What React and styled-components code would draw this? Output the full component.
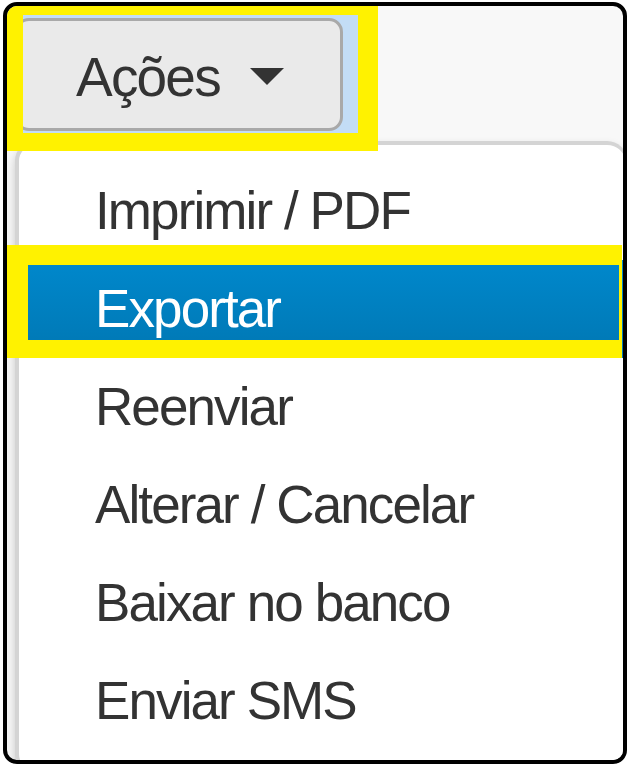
import styled, { createGlobalStyle } from "styled-components";

const Global = createGlobalStyle`
  html, body {
    margin: 0;
    padding: 0;
    background: #ffffff;
  }
  body {
    font-family: "Liberation Sans", Arial, sans-serif;
  }
`;

const Frame = styled.div`
  position: relative;
  box-sizing: border-box;
  margin: 2px 0 0 3px;
  width: 624px;
  height: 762px;
  border: 4px solid #000;
  border-radius: 14px;
  overflow: hidden;
  background: #f8f8f8;
  padding: 9px 0 0 8px;
`;

const ButtonGroup = styled.div`
  display: inline-flex;
  background: #c3ddf6;
  padding: 3px 15px 3px 0;
`;

const Button = styled.button`
  box-sizing: border-box;
  display: flex;
  align-items: center;
  gap: 30px;
  width: 328px;
  height: 113px;
  padding: 0 0 0 58px;
  border: 3px solid #a9a9a9;
  border-radius: 14px;
  background: #eaeaea;
  color: #333;
  font-family: inherit;
  font-size: 55px;
  letter-spacing: -1.8px;
  line-height: 1;
`;

const Label = styled.span`
  padding-top: 6px;
`;

const Caret = styled.span`
  width: 0;
  height: 0;
  border-top: 17px solid #333;
  border-left: 17px solid transparent;
  border-right: 17px solid transparent;
  margin-top: 4px;
`;

const Menu = styled.ul`
  box-sizing: border-box;
  list-style: none;
  margin: 7px 0 0 0;
  width: 612px;
  padding: 17px 0 20px 0;
  background: #fff;
  border: 4px solid rgba(0, 0, 0, 0.17);
  border-right-width: 2px;
  border-radius: 20px;
  box-shadow: 0 5px 10px rgba(0, 0, 0, 0.2);
`;

const Item = styled.li`
  height: 98px;
  line-height: 98px;
  padding-left: 76px;
  font-size: 53px;
  letter-spacing: -1.9px;
  white-space: nowrap;
  color: ${(p) => (p.$active ? "#fff" : "#333")};
  background: ${(p) =>
    p.$active ? "linear-gradient(to bottom, #0088cc, #0077b3)" : "transparent"};
`;

const Mark = styled.div`
  position: absolute;
  box-sizing: border-box;
  border-style: solid;
  border-color: #fff200;
  pointer-events: none;
`;

const items = [
  "Imprimir / PDF",
  "Exportar",
  "Reenviar",
  "Alterar / Cancelar",
  "Baixar no banco",
  "Enviar SMS",
];

export default function App() {
  return (
    <>
      <Global />
      <Frame>
        <ButtonGroup>
          <Button>
            <Label>Ações</Label>
            <Caret />
          </Button>
        </ButtonGroup>
        <Menu>
          {items.map((t) => (
            <Item key={t} $active={t === "Exportar"}>
              {t}
            </Item>
          ))}
        </Menu>
        <Mark
          style={{
            left: 0,
            top: -1,
            width: 371,
            height: 146,
            borderWidth: "10px 20px 18px 16px",
          }}
        />
        <Mark
          style={{
            left: 0,
            top: 239,
            width: 615,
            height: 113,
            borderWidth: "20px 3px 18px 21px",
          }}
        />
      </Frame>
    </>
  );
}
